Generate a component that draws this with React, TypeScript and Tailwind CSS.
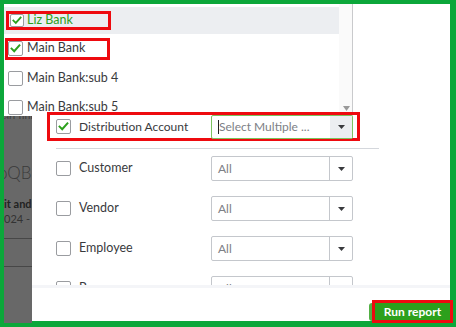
import React from "react";

const GREEN = "#2ca01c";

function Check() {
  return (
    <svg width="15" height="15" viewBox="0 0 15 15" className="block">
      <polyline points="3,7.6 6,10.6 12,3.8" fill="none" stroke={GREEN} strokeWidth="2.3" strokeLinecap="square" />
    </svg>
  );
}

function Box({ checked = false }: { checked?: boolean }) {
  return (
    <span className="flex h-[15px] w-[15px] shrink-0 items-center justify-center rounded-[2px] border border-[#9a9ca0] bg-white">
      {checked && <Check />}
    </span>
  );
}

function Caret() {
  return (
    <svg width="7" height="4" viewBox="0 0 7 4" className="block">
      <path d="M0 0h7L3.5 4z" fill="#393a3d" />
    </svg>
  );
}

function Select({ value = "All" }: { value?: string }) {
  return (
    <div className="flex h-[25px] w-[142px] shrink-0 rounded-[2px] border border-[#c4c7cc] bg-white">
      <span className="flex-1 pl-[6px] text-[12px] leading-[23px] text-[#7d8086]">{value}</span>
      <span className="flex w-[23px] items-center justify-center border-l border-[#c4c7cc]">
        <Caret />
      </span>
    </div>
  );
}

function ListRow({ label, h }: { label: string; h: string }) {
  return (
    <div className={`flex items-center ${h}`}>
      <div className="flex items-center pl-[4px]">
        <Box />
        <span className="ml-[4px] whitespace-nowrap text-[12.5px] text-[#393a3d]">{label}</span>
      </div>
    </div>
  );
}

const FILTERS = ["Customer", "Vendor", "Employee", "Payee"];

export default function App() {
  return (
    <div className="relative flex h-[327px] w-[456px] flex-col border-b-[6px] border-l-4 border-r-[6px] border-t-4 border-[#0ca73a] bg-white font-['Lato','Open_Sans',sans-serif]">
      {/* account dropdown list */}
      <div className="flex h-[112px] shrink-0">
        <div className="flex w-[349px] overflow-hidden border-r border-[#c9cacc]">
          <div className="flex-1 pt-[3px]">
            <div className="flex h-[27px] items-center bg-[#eceef1]">
              <div className="ml-[2px] flex h-[19px] w-[105px] items-center border-[3px] border-[#ee0a0f] pl-[1px]">
                <span className="flex h-[13px] w-[14px] items-center justify-center rounded-[2px] border border-[#9a9ca0] bg-white">
                  <Check />
                </span>
                <span className="ml-[3px] text-[12.5px] text-[#2ca01c]">Liz Bank</span>
              </div>
            </div>
            <div className="flex h-[29px] items-center">
              <div className="ml-[1px] flex h-[22px] w-[105px] items-center border-[3px] border-[#ee0a0f]">
                <Box checked />
                <span className="ml-[4px] text-[12.5px] text-[#393a3d]">Main Bank</span>
              </div>
            </div>
            <ListRow label="Main Bank:sub 4" h="h-[31px]" />
            <ListRow label="Main Bank:sub 5" h="h-[27px]" />
          </div>
          <div className="flex w-[13px] flex-col justify-end bg-[#fafafa] pb-[5px] pl-[4px]">
            <svg width="7" height="5" viewBox="0 0 7 5" className="block">
              <path d="M0 0h7L3.5 5z" fill="#9a9a9a" />
            </svg>
          </div>
        </div>
        <div className="flex-1" />
      </div>

      {/* lower area: dimmed page + report modal */}
      <div className="flex flex-1">
        <div className="flex w-[28px] shrink-0 flex-col overflow-hidden bg-[#686868] text-[#2e2e2e]">
          <div className="h-[3px] overflow-hidden">
            <div className="-mt-[7px] whitespace-nowrap text-[10px] text-[#3a3a3a]">art util</div>
          </div>
          <div className="-ml-[6px] mt-[44px] whitespace-nowrap text-[17px] font-light leading-[20px] text-[#3a3a3a]">oQB Test</div>
          <div className="mt-[15px] whitespace-nowrap text-[11px] font-bold leading-[12px] text-[#222]">it and Loss</div>
          <div className="mt-[3px] whitespace-nowrap text-[11px] leading-[12px] text-[#333]">024 - August</div>
          <div className="mt-[13px] h-px bg-[#474747]" />
          <div className="mt-[27px] h-px bg-[#474747]" />
        </div>

        <div className="flex flex-1 flex-col">
          <div className="h-[169px] shrink-0">
            <div className="relative z-10 -mt-[4px] ml-[15px] flex h-[29px] w-[313px] items-center border-[3px] border-[#ee0a0f] pl-[6px]">
              <Box checked />
              <span className="ml-[8px] w-[132px] text-[12px] text-[#393a3d]">Distribution Account</span>
              <div className="flex h-[24px] w-[142px] rounded-[2px] border border-[#7cc25e] bg-white">
                <span className="flex flex-1 items-center pl-[6px]">
                  <span className="whitespace-nowrap border-l border-[#222] text-[12px] leading-[14px] text-[#7d8086]">Select Multiple ...</span>
                </span>
                <span className="flex w-[22px] items-center justify-center bg-[#eceef1]">
                  <Caret />
                </span>
              </div>
            </div>
            <div className="ml-[24px] mt-[7px] h-px w-[323px] bg-[#d4d7dc]" />
            <div className="flex h-[136px] flex-col gap-[15px] overflow-hidden pt-[7px]">
              {FILTERS.map((f) => (
                <div key={f} className="flex h-[25px] shrink-0 items-center pl-[24px]">
                  <Box />
                  <span className="ml-[8px] w-[132px] text-[12.5px] text-[#393a3d]">{f}</span>
                  <Select />
                </div>
              ))}
            </div>
          </div>

          <div className="flex flex-1 items-start justify-end border-t-[3px] border-[#f4f5f8] pt-[12px]">
            <div className="relative z-10 -mr-[3px] flex items-center">
              <span className="h-[18px] w-[3px] rounded-l-full bg-[#52b044]" />
              <div className="h-[23px] w-[81px] border-[3px] border-[#ee0a0f] bg-[#2ca01c] text-center text-[12px] font-bold leading-[17px] text-white">
                Run report
              </div>
            </div>
          </div>
        </div>
      </div>
    </div>
  );
}
